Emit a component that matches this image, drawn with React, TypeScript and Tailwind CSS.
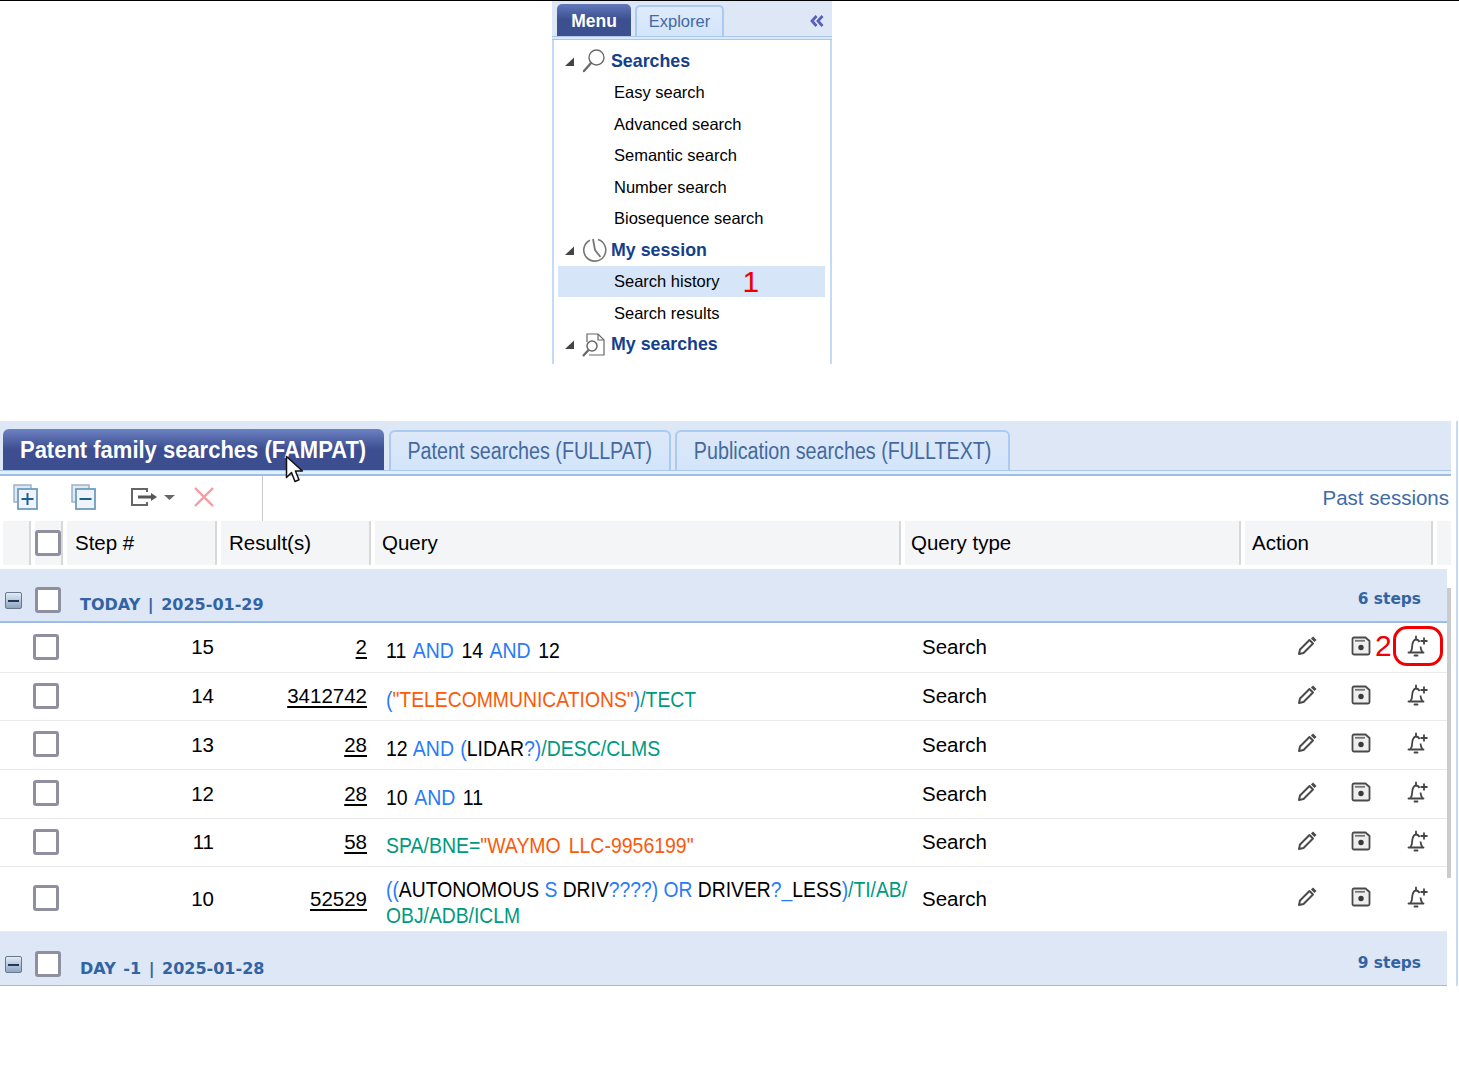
import type { ReactNode } from "react";

const sans = "[font-family:'Liberation_Sans',Arial,sans-serif]";
const verdana = "[font-family:'DejaVu_Sans',sans-serif]";

type Tok = [string, "k" | "b" | "o" | "t"];

const tone = { k: "text-black", b: "text-[#2a7bf6]", o: "text-[#fa5a0a]", t: "text-[#00997f]" };

const rows: { step: string; res: string; h: string; fit: string; q: Tok[] }[] = [
    { step: "15", res: "2", h: "h-[50px]", fit: "scale-x-[0.865] [word-spacing:2.500px]", q: [["11 ", "k"], ["AND", "b"], [" 14 ", "k"], ["AND", "b"], [" 12", "k"]] },
    { step: "14", res: "3412742", h: "h-[48px]", fit: "scale-x-[0.86]", q: [["(", "b"], ['"TELECOMMUNICATIONS"', "o"], [")", "b"], ["/TECT", "t"]] },
    { step: "13", res: "28", h: "h-[49px]", fit: "scale-x-[0.865] [word-spacing:1px]", q: [["12 ", "k"], ["AND (", "b"], ["LIDAR", "k"], ["?)", "b"], ["/DESC/CLMS", "t"]] },
    { step: "12", res: "28", h: "h-[49px]", fit: "scale-x-[0.865] [word-spacing:2.500px]", q: [["10 ", "k"], ["AND", "b"], [" 11", "k"]] },
    { step: "11", res: "58", h: "h-[48px]", fit: "scale-x-[0.865] [word-spacing:3px]", q: [["SPA/BNE=", "t"], ['"WAYMO LLC-9956199"', "o"]] },
    {
        step: "10",
        res: "52529",
        h: "h-[65px]",
        fit: "scale-x-[0.858]",
        q: [
            ["((", "b"], ["AUTONOMOUS ", "k"], ["S ", "b"], ["DRIV", "k"], ["????) OR ", "b"], ["DRIVER", "k"], ["?_", "b"], ["LESS", "k"], [")", "b"], ["/TI/AB/", "t"], ["\n", "k"], ["OBJ/ADB/ICLM", "t"],
        ],
    },
];

function Checkbox() {
    return <span className="block size-[26px] rounded-[3px] border-[3px] border-[#8f8f9f] bg-white" />;
}

function Collapse() {
    return (
        <span className="flex h-[17px] w-[17px] items-center justify-center rounded-[2px] border border-[#66798f] bg-gradient-to-b from-[#e3ebf4] to-[#8fa6c0]">
            <span className="h-[2px] w-[11px] bg-[#1f3a5c]" />
        </span>
    );
}

function Triangle() {
    return (
        <svg width="11" height="11" viewBox="0 0 11 11" className="shrink-0">
            <path d="M10 1.500V10H1Z" fill="#444" />
        </svg>
    );
}

function SearchIcon() {
    return (
        <svg width="26" height="26" viewBox="0 0 26 26" fill="none" stroke="#6b6b6b">
            <circle cx="15.500" cy="9.500" r="7.500" strokeWidth="1.400" />
            <path d="M10 15 3 23" strokeWidth="2.400" strokeLinecap="round" />
        </svg>
    );
}

function ClockIcon() {
    return (
        <svg width="26" height="26" viewBox="0 0 26 26" fill="none" stroke="#777">
            <path d="M9 3.200A11 11 0 1 0 17 2.600" strokeWidth="1.600" />
            <path d="M12 2 14 13 19.500 20" strokeWidth="1.800" />
        </svg>
    );
}

function DocSearchIcon() {
    return (
        <svg width="26" height="26" viewBox="0 0 26 26" fill="none" stroke="#666">
            <path d="M6 10V2h11l6 6v15H8" strokeWidth="1.200" />
            <path d="M17 2v6h6" strokeWidth="1.200" />
            <circle cx="11" cy="14" r="5" strokeWidth="1.500" />
            <path d="M7.500 18 2 24" strokeWidth="2.200" />
        </svg>
    );
}

function PencilIcon() {
    return (
        <svg width="20" height="20" viewBox="0 0 20 20" fill="none" stroke="#4a4a4a" strokeWidth="2">
            <path d="M2 18l1-4.500L12.500 4 16 7.500 6.500 17Z" strokeLinejoin="round" />
            <path d="M15 1.500l3.500 3.500" strokeWidth="3" />
        </svg>
    );
}

function SaveIcon() {
    return (
        <svg width="20" height="20" viewBox="0 0 20 20">
            <path d="M3 1.500h11.500L18.500 5v12a1.500 1.500 0 0 1-1.500 1.500H3A1.500 1.500 0 0 1 1.500 17V3A1.500 1.500 0 0 1 3 1.500Z" fill="#eee" stroke="#4a4a4a" strokeWidth="1.800" />
            <path d="M4 4.800h10" stroke="#777" strokeWidth="1.800" />
            <circle cx="10" cy="11.500" r="2.700" fill="#3a3a3a" />
        </svg>
    );
}

function BellPlusIcon() {
    return (
        <svg width="24" height="24" viewBox="0 0 24 24" fill="none" stroke="#444" strokeWidth="1.800">
            <path d="M3.500 18.500h15" strokeLinecap="round" />
            <path d="M5.500 18c1.500-1.600 1.700-3.400 1.700-6 0-3.500 1.800-6.500 3.800-6.500 1.600 0 2.800 1 3.500 2.500M15.500 12.500c.2 2.300.7 4 1.800 5.500" />
            <path d="M11 2.500v3M9.500 21.500h3" strokeLinecap="round" />
            <path d="M19 3.500v7M15.500 7h7" strokeWidth="1.800" />
        </svg>
    );
}

function MenuRow({ label, active, children }: { label: string; active?: boolean; children?: ReactNode }) {
    return (
        <div className={`flex h-[31.500px] items-center pl-[56px] text-[16.500px] text-black ${active ? "bg-[#d6e5f8]" : ""}`}>
            <span>{label}</span>
            {children}
        </div>
    );
}

function MenuHead({ label, icon }: { label: string; icon: ReactNode }) {
    return (
        <div className="flex h-[31.500px] items-center pl-[6px]">
            <Triangle />
            <span className="ml-[6px] flex w-[26px] justify-center">{icon}</span>
            <span className="ml-[4px] text-[17.800px] font-bold text-[#153f8b]">{label}</span>
        </div>
    );
}

function MenuPanel() {
    return (
        <div className={`mx-auto h-[363px] w-[280px] overflow-hidden bg-[#dde7f5] ${sans}`}>
            <div className="flex h-[35px] items-end pl-[5px] pt-[4px]">
                <div className="flex h-[32px] w-[74px] items-center justify-center rounded-t-[5px] bg-gradient-to-b from-[#6278bb] via-[#3c4f8f] to-[#3c4f8f] pt-[2px] text-[17.500px] font-bold text-white">
                    Menu
                </div>
                <div className="ml-[4px] flex h-[31px] w-[89px] items-center justify-center rounded-t-[5px] border-2 border-b-0 border-[#a9cbf3] bg-gradient-to-b from-[#dfeafa] to-[#d3e5fb] text-[16.500px] text-[#44699f]">
                    Explorer
                </div>
                <div className="ml-auto mb-[9px] mr-[8px] text-[#5b5fb8]">
                    <svg width="14" height="12" viewBox="0 0 14 12" fill="none" stroke="currentColor" strokeWidth="2.800">
                        <path d="M6.500 1 2 6l4.500 5M12.500 1 8 6l4.500 5" />
                    </svg>
                </div>
            </div>
            <div className="h-[4px] border-y border-[#a9c8ee] bg-[#dbe8f8]" />
            <div className="h-[324px] border-x-2 border-x-[#c5daf5] bg-white pl-[4px] pr-[5px] pt-[5.400px]">
                <MenuHead label="Searches" icon={<SearchIcon />} />
                <MenuRow label="Easy search" />
                <MenuRow label="Advanced search" />
                <MenuRow label="Semantic search" />
                <MenuRow label="Number search" />
                <MenuRow label="Biosequence search" />
                <MenuHead label="My session" icon={<ClockIcon />} />
                <MenuRow label="Search history" active>
                    <span className="ml-[23px] text-[30px] leading-none text-[#f00000]">1</span>
                </MenuRow>
                <MenuRow label="Search results" />
                <MenuHead label="My searches" icon={<DocSearchIcon />} />
            </div>
        </div>
    );
}

function GroupRow({ label, steps, h }: { label: string; steps: string; h: string }) {
    return (
        <div className={`flex ${h} items-end bg-[#dde7f5] pr-[26px] pb-[7px]`}>
            <span className="mb-[5px] ml-[5px]"><Collapse /></span>
            <span className="ml-[13px] mb-[1px]"><Checkbox /></span>
            <span className={`ml-[19px] mb-[1px] ${verdana} text-[16px] font-bold leading-none text-[#3263a3] [word-spacing:2px]`}>{label}</span>
            <span className={`mb-[7px] ml-auto ${verdana} text-[15.400px] font-bold leading-none text-[#3263a3]`}>{steps}</span>
        </div>
    );
}

function Row({ r, first }: { r: (typeof rows)[number]; first: boolean }) {
    return (
        <div className={`relative flex ${r.h} items-center border-b border-[#e9e9ee] bg-white text-[20.500px] text-black`}>
            <span className="ml-[33px] -translate-y-[1px]"><Checkbox /></span>
            <span className="ml-[131px] w-[24px] text-right">{r.step}</span>
            <span className="w-[153px] text-right underline underline-offset-[3px]">{r.res}</span>
            <div className="ml-[19px] w-[524px] shrink-0 pt-[7px] text-[22.500px] leading-[25.500px]">
                <span className={`inline-block origin-left whitespace-pre ${r.fit}`}>
                    {r.q.map((t, i) =>
                        t[0] === "\n" ? <br key={i} /> : <span key={i} className={tone[t[1]]}>{t[0]}</span>,
                    )}
                </span>
            </div>
            <span className="ml-[12px] w-[375px]">Search</span>
            <span className="flex w-[20px] -translate-y-[2px]"><PencilIcon /></span>
            <span className="ml-[34px] flex w-[20px] -translate-y-[2px]"><SaveIcon /></span>
            <span className="ml-[34px] flex w-[24px] -translate-y-[2px]"><BellPlusIcon /></span>
            {first && (
                <>
                    <span className="absolute left-[1375px] top-[8px] text-[30px] leading-none text-[#f00000]">2</span>
                    <span className="absolute left-[1393px] top-[3px] h-[40px] w-[50px] rounded-[14px] border-[3px] border-[#f00000]" />
                </>
            )}
        </div>
    );
}

function HeadCell({ w, label, pad = "pl-[7px]", children }: { w: string; label?: string; pad?: string; children?: ReactNode }) {
    return (
        <div className={`flex h-full ${w} shrink-0 items-center border-r-2 border-[#d8d8d8] bg-[#f4f5f7] ${pad} text-[20.500px] text-black`}>
            {label}
            {children}
        </div>
    );
}

const idleTab = "flex h-[40px] items-center justify-center rounded-t-[6px] border-2 border-b-0 border-[#a9cbf3] bg-gradient-to-b from-[#dde8f8] to-[#d3e5fb] text-[23px] text-[#44699f]";

function History() {
    return (
        <div className={`relative mt-[57px] w-[1459px] ${sans}`}>
            <div className="w-[1451px]">
                <div className="flex h-[49px] items-end bg-[#dde7f5] pl-[3px]">
                    <div className="flex h-[41px] w-[381px] items-center justify-center whitespace-nowrap rounded-t-[6px] bg-gradient-to-b from-[#6d82c2] via-[#3c4e8f] to-[#3c4e8f] pt-[2px] text-[23px] font-bold text-white">
                        <span className="inline-block scale-x-[0.956]">Patent family searches (FAMPAT)</span>
                    </div>
                    <div className={`${idleTab} ml-[5px] w-[282px]`}>
                        <span className="inline-block scale-x-[0.857] whitespace-nowrap">Patent searches (FULLPAT)</span>
                    </div>
                    <div className={`${idleTab} ml-[4px] w-[335px]`}>
                        <span className="inline-block scale-x-[0.857] whitespace-nowrap">Publication searches (FULLTEXT)</span>
                    </div>
                </div>
                <div className="h-[6px] border-t border-b-2 border-t-[#a9c8ee] border-b-[#9dbde8] bg-[#e6eef9]" />
                <div className="flex h-[45px] items-center bg-white">
                    <div className="flex h-[45px] w-[263px] items-center border-r border-[#c8c8c8] pb-[3px] pl-[13px]">
                        <svg width="25" height="26" viewBox="0 0 25 26" fill="none">
                            <rect x="1" y="1" width="17" height="17" fill="#dfe9f3" stroke="#9db3c6" strokeWidth="1.500" />
                            <rect x="5" y="5" width="19" height="20" fill="#eef4fa" stroke="#6f9cc0" strokeWidth="1.800" />
                            <path d="M14.500 9v12M8.500 15h12" stroke="#1f5f8f" strokeWidth="2" />
                        </svg>
                        <svg className="ml-[33px]" width="25" height="26" viewBox="0 0 25 26" fill="none">
                            <rect x="1" y="1" width="17" height="17" fill="#dfe9f3" stroke="#9db3c6" strokeWidth="1.500" />
                            <rect x="5" y="5" width="19" height="20" fill="#eef4fa" stroke="#6f9cc0" strokeWidth="1.800" />
                            <path d="M8.500 15h12" stroke="#1f5f8f" strokeWidth="2" />
                        </svg>
                        <svg className="ml-[34px]" width="46" height="22" viewBox="0 0 46 22" fill="none">
                            <path d="M17 6V3H2v16h15v-3" stroke="#666" strokeWidth="2" />
                            <path d="M8 11h14" stroke="#555" strokeWidth="3" />
                            <path d="M21 7l6 4-6 4Z" fill="#555" />
                            <path d="M34 9h11l-5.500 5Z" fill="#666" />
                        </svg>
                        <svg className="ml-[17px]" width="22" height="22" viewBox="0 0 22 22" fill="none" stroke="#f89a9e" strokeWidth="2.400">
                            <path d="M2 2l18 18M20 2 2 20" />
                        </svg>
                    </div>
                    <span className="ml-auto mr-[2px] text-[20.500px] text-[#3e6ba8]">Past sessions</span>
                </div>
                <div className="flex h-[44px] items-stretch gap-[4px] bg-white pl-[3px]">
                    <HeadCell w="w-[28px]" />
                    <HeadCell w="w-[28px]" pad=""><Checkbox /></HeadCell>
                    <HeadCell w="w-[150px]" label="Step #" pad="pl-[8px]" />
                    <HeadCell w="w-[150px]" label="Result(s)" pad="pl-[8px]" />
                    <HeadCell w="w-[526px]" label="Query" />
                    <HeadCell w="w-[336px]" label="Query type" pad="pl-[6px]" />
                    <HeadCell w="w-[188px]" label="Action" />
                    <div className="flex-1 bg-[#f4f5f7]" />
                </div>
                <div className="h-[4px] bg-white" />
                <div className="relative pr-[4px]">
                    <GroupRow label="TODAY | 2025-01-29" steps="6 steps" h="h-[52px]" />
                    <div className="h-[2px] bg-[#9dbde8]" />
                    {rows.map((r, i) => (
                        <Row key={r.step} r={r} first={i === 0} />
                    ))}
                    <GroupRow label="DAY -1 | 2025-01-28" steps="9 steps" h="h-[53px]" />
                    <div className="h-px bg-[#9dbde8]" />
                    <div className="absolute right-0 top-[19px] h-[290px] w-[4px] bg-[#cbcbcb]" />
                </div>
            </div>
            <div className="absolute right-[1px] top-0 bottom-0 w-[2px] bg-[#c5daf5]" />
            <svg className="absolute left-[285px] top-[34px]" width="20" height="29" viewBox="0 0 20 29">
                <path d="M1.500 1.500v21l5-5 3.500 9 4-1.700-3.600-8.800h7Z" fill="#fff" stroke="#111" strokeWidth="1.500" strokeLinejoin="round" />
            </svg>
        </div>
    );
}

export default function App() {
    return (
        <div className="min-h-[1080px] w-[1459px] overflow-hidden border-t border-black bg-white">
            <div className="w-[1384px]"><MenuPanel /></div>
            <History />
        </div>
    );
}
